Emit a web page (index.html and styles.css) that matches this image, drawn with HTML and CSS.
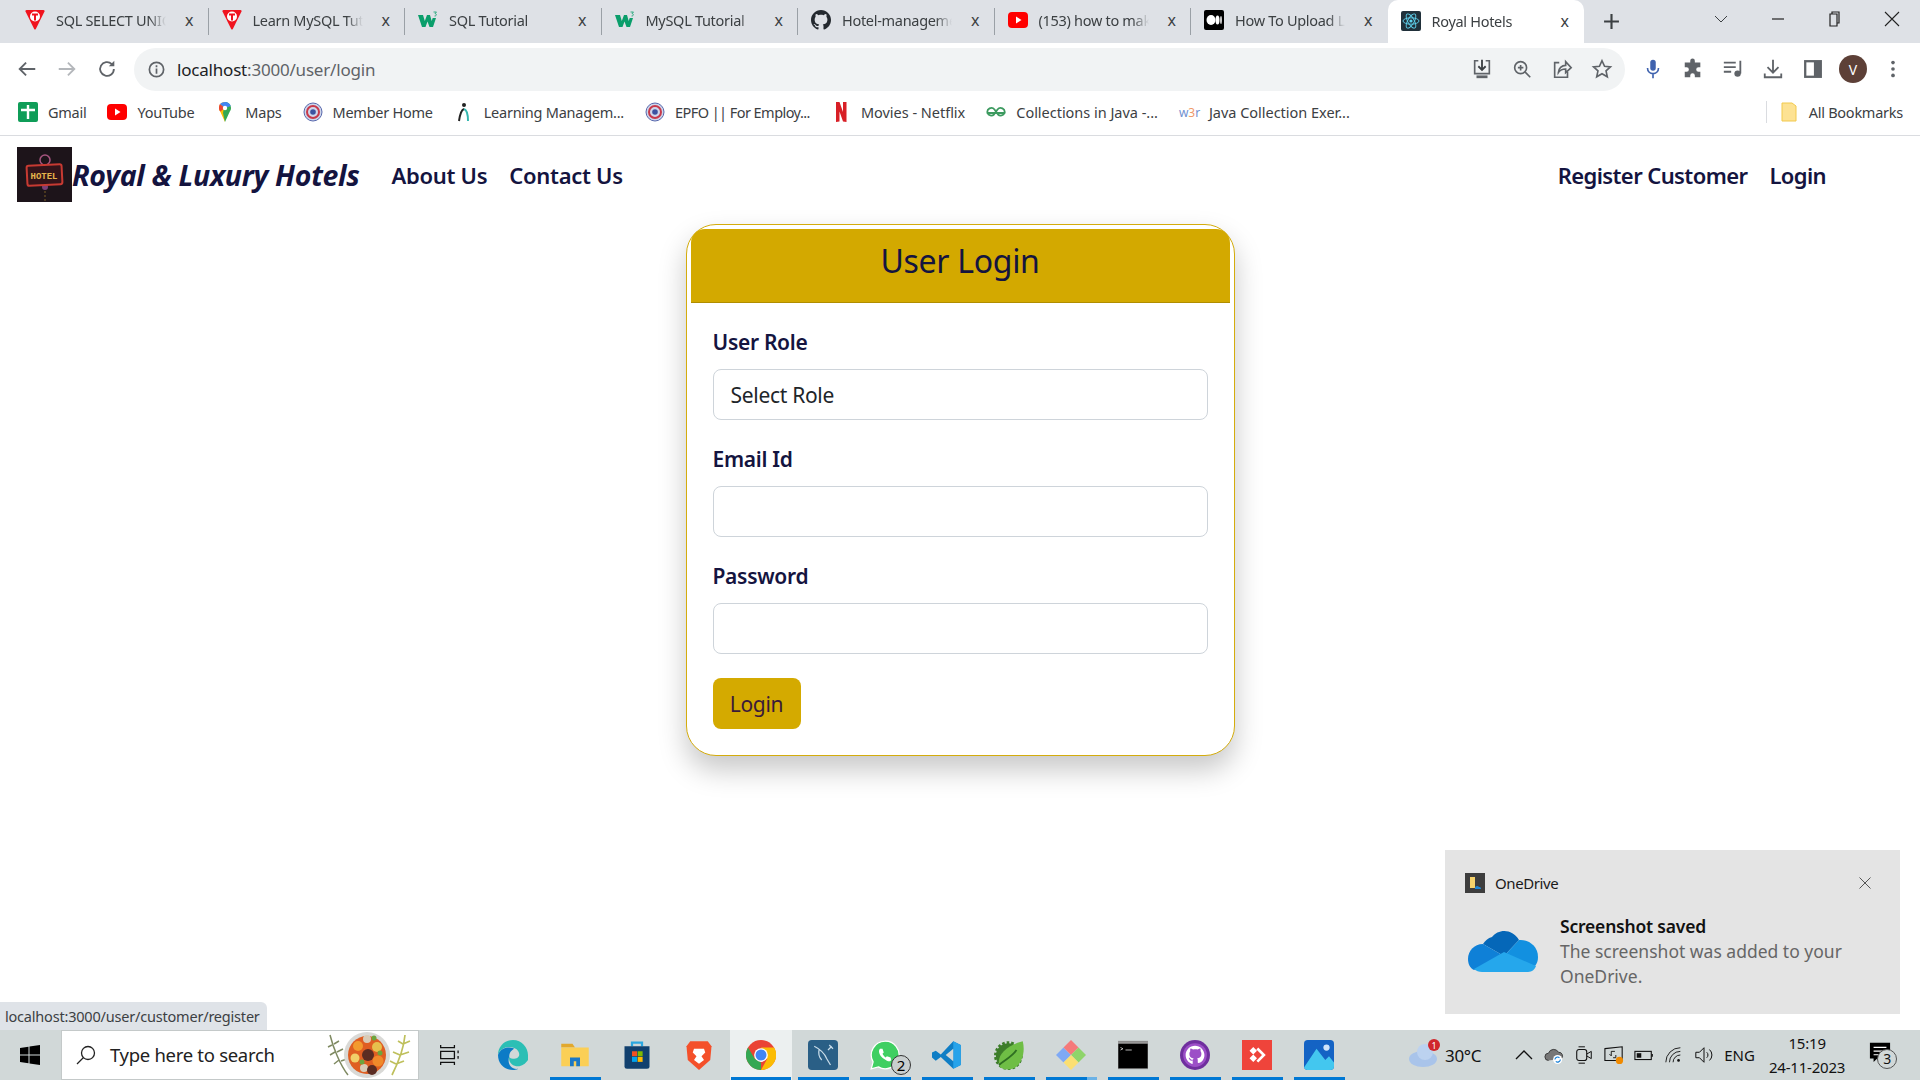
FILE: index.html
```html
<!DOCTYPE html>
<html lang="en">
<head>
  <meta charset="UTF-8">
  <title>Royal Hotels</title>
  <link rel="stylesheet" href="styles.css">
</head>
<body>
  <div class="tabstrip">
    <div class="tab">
      <svg class="tab-icon" viewBox="0 0 20 20"><path d="M1.500 0h17q1.500 0 1 1.500L10.800 19q-.8 1-1.600 0L.5 1.500q-.5-1.500 1-1.500z" fill="#f0131e"/><circle cx="10" cy="6.500" r="5" fill="#fff"/><path d="M7 3.500h6v2h-2v5H9v-5H7z" fill="#f0131e"/></svg>
      <span class="tab-title">SQL SELECT UNIQUE</span><span class="tab-close">x</span>
    </div>
    <div class="tab">
      <svg class="tab-icon" viewBox="0 0 20 20"><path d="M1.500 0h17q1.500 0 1 1.500L10.800 19q-.8 1-1.600 0L.5 1.500q-.5-1.500 1-1.500z" fill="#f0131e"/><circle cx="10" cy="6.500" r="5" fill="#fff"/><path d="M7 3.500h6v2h-2v5H9v-5H7z" fill="#f0131e"/></svg>
      <span class="tab-title">Learn MySQL Tutorial</span><span class="tab-close">x</span>
    </div>
    <div class="tab">
      <svg class="tab-icon" viewBox="0 0 20 20"><path d="M0 5h5l1.800 6L9 5h3l1.700 6 1-3h3.300l-3 9h-3.500L9.500 11.500 7.500 17H4z" fill="#0a9e6b"/><path d="M15.500 2h3l-1.500 1.500c1.800 0 1.800 2.800-.5 2.500" fill="none" stroke="#0a9e6b" stroke-width=".8"/></svg>
      <span class="tab-title">SQL Tutorial</span><span class="tab-close">x</span>
    </div>
    <div class="tab">
      <svg class="tab-icon" viewBox="0 0 20 20"><path d="M0 5h5l1.800 6L9 5h3l1.700 6 1-3h3.300l-3 9h-3.500L9.500 11.500 7.500 17H4z" fill="#0a9e6b"/><path d="M15.500 2h3l-1.500 1.500c1.800 0 1.800 2.800-.5 2.500" fill="none" stroke="#0a9e6b" stroke-width=".8"/></svg>
      <span class="tab-title">MySQL Tutorial</span><span class="tab-close">x</span>
    </div>
    <div class="tab">
      <svg class="tab-icon" viewBox="0 0 16 16"><path fill="#24292f" d="M8 0C3.580 0 0 3.580 0 8c0 3.540 2.290 6.530 5.470 7.590.4.070.55-.17.55-.38 0-.19-.01-.82-.01-1.490-2.010.37-2.530-.49-2.690-.94-.09-.23-.48-.94-.82-1.130-.28-.15-.68-.52-.01-.53.630-.01 1.080.58 1.230.82.720 1.210 1.870.87 2.330.66.070-.52.280-.87.510-1.070-1.780-.2-3.640-.89-3.640-3.950 0-.87.310-1.590.820-2.150-.08-.2-.36-1.020.08-2.120 0 0 .67-.21 2.200.820.640-.18 1.320-.27 2-.27s1.360.09 2 .27c1.530-1.040 2.200-.82 2.200-.82.440 1.100.160 1.920.080 2.120.510.560.820 1.270.820 2.150 0 3.070-1.870 3.750-3.650 3.950.290.250.540.730.540 1.480 0 1.070-.01 1.930-.01 2.200 0 .210.150.460.550.380C13.710 14.530 16 11.530 16 8c0-4.420-3.580-8-8-8z"/></svg>
      <span class="tab-title">Hotel-management</span><span class="tab-close">x</span>
    </div>
    <div class="tab">
      <svg class="tab-icon" viewBox="0 0 20 20"><rect y="2" width="20" height="16" rx="4" fill="#f00"/><path d="M8 6.500v7l5.500-3.500z" fill="#fff"/></svg>
      <span class="tab-title">(153) how to make</span><span class="tab-close">x</span>
    </div>
    <div class="tab">
      <svg class="tab-icon" viewBox="0 0 20 20"><rect width="20" height="20" rx="2" fill="#000"/><ellipse cx="7" cy="10" rx="4.500" ry="5" fill="#fff"/><ellipse cx="13.500" cy="10" rx="2" ry="4.500" fill="#fff"/><ellipse cx="17" cy="10" rx=".8" ry="4" fill="#fff"/></svg>
      <span class="tab-title">How To Upload Large</span><span class="tab-close">x</span>
    </div>
    <div class="tab active">
      <svg class="tab-icon" viewBox="0 0 20 20"><rect width="20" height="20" rx="2" fill="#20303a"/><g fill="none" stroke="#5fd3ef" stroke-width=".9"><ellipse cx="10" cy="10" rx="8" ry="3.200"/><ellipse cx="10" cy="10" rx="8" ry="3.200" transform="rotate(60 10 10)"/><ellipse cx="10" cy="10" rx="8" ry="3.200" transform="rotate(120 10 10)"/></g><circle cx="10" cy="10" r="1.600" fill="#5fd3ef"/></svg>
      <span class="tab-title">Royal Hotels</span><span class="tab-close">x</span>
    </div>
    <svg class="new-tab" viewBox="0 0 16 16"><path d="M8 1v14M1 8h14" stroke="#3c4043" stroke-width="2"/></svg>
    <div class="window-controls">
      <svg class="win-btn" viewBox="0 0 16 16"><path d="M2 5l6 6 6-6" fill="none" stroke="#3c4043"/></svg>
      <svg class="win-btn" viewBox="0 0 16 16"><path d="M2 8h12" stroke="#222" stroke-width="1.200"/></svg>
      <svg class="win-btn" viewBox="0 0 16 16"><path d="M5 3V1h7v11h-2M3 3h7v12H3z" fill="none" stroke="#222" stroke-width="1.200"/></svg>
      <svg class="win-btn" viewBox="0 0 16 16"><path d="M1 1l14 14M15 1L1 15" stroke="#222" stroke-width="1.100"/></svg>
    </div>
  </div>

  <div class="toolbar">
    <svg class="tool-icon" viewBox="0 0 24 24"><path d="M21 12H4M11 5l-7 7 7 7" fill="none" stroke="#5f6368" stroke-width="2"/></svg>
    <svg class="tool-icon" viewBox="0 0 24 24"><path d="M3 12h17M13 5l7 7-7 7" fill="none" stroke="#b4b7bb" stroke-width="2"/></svg>
    <svg class="tool-icon" viewBox="0 0 24 24"><path d="M19.500 12a7.500 7.500 0 1 1-2.300-5.400" fill="none" stroke="#5f6368" stroke-width="2"/><path d="M20 3v6h-6z" fill="#5f6368"/></svg>
    <div class="omnibox">
      <svg class="omni-info" viewBox="0 0 20 20"><circle cx="10" cy="10" r="7.500" fill="none" stroke="#5f6368" stroke-width="1.800"/><path d="M10 9v5.500M10 5.500v2" stroke="#5f6368" stroke-width="1.800"/></svg>
      <span class="url">localhost<span class="url-dim">:3000/user/login</span></span>
      <div class="omni-actions">
        <svg class="tool-icon" viewBox="0 0 24 24"><path d="M8 3H4v14h16V3h-4" fill="none" stroke="#5f6368" stroke-width="1.800"/><path d="M12 2v11M8 9l4 4 4-4" fill="none" stroke="#3c4043" stroke-width="2"/><path d="M6 19h12v3H6z" fill="#5f6368"/></svg>
        <svg class="tool-icon" viewBox="0 0 24 24"><circle cx="10.500" cy="10.500" r="6.500" fill="none" stroke="#5f6368" stroke-width="1.800"/><path d="M15.500 15.500L21 21M10.500 7.500v6M7.500 10.500h6" stroke="#5f6368" stroke-width="1.800"/></svg>
        <svg class="tool-icon" viewBox="0 0 24 24"><path d="M9 5H4v16h14v-6" fill="none" stroke="#5f6368" stroke-width="1.800"/><path d="M8 16c0-5 4-8 8-8V4l6 6.500L16 16v-4c-3 0-6 1-8 4z" fill="none" stroke="#5f6368" stroke-width="1.800"/></svg>
        <svg class="tool-icon" viewBox="0 0 24 24"><path d="M12 3l2.800 6 6.400.7-4.800 4.300 1.400 6.500L12 17.200l-5.800 3.300 1.400-6.500-4.800-4.300 6.400-.7z" fill="none" stroke="#5f6368" stroke-width="1.800"/></svg>
      </div>
    </div>
    <div class="tool-right">
      <svg class="tool-icon" viewBox="0 0 24 24"><rect x="9" y="2" width="6" height="12" rx="3" fill="#3f62ae"/><path d="M6 11c0 8 12 8 12 0M12 17v5" fill="none" stroke="#3f62ae" stroke-width="1.800"/></svg>
      <svg class="tool-icon" viewBox="0 0 24 24"><path d="M9 3a2.500 2.500 0 0 1 5 0v2h6v5h-2a2.500 2.500 0 0 0 0 5h2v6h-6v-2a2.500 2.500 0 0 0-5 0v2H3v-6h2a2.500 2.500 0 0 0 0-5H3V5h6z" fill="#5f6368"/></svg>
      <svg class="tool-icon" viewBox="0 0 24 24"><path d="M2 5h13M2 10h13M2 15h8" stroke="#5f6368" stroke-width="2"/><path d="M20 3v14" stroke="#5f6368" stroke-width="2"/><circle cx="17" cy="17" r="3.500" fill="#5f6368"/></svg>
      <svg class="tool-icon" viewBox="0 0 24 24"><path d="M12 2v13M6 10l6 6 6-6" fill="none" stroke="#5f6368" stroke-width="2"/><path d="M3 17v4h18v-4" fill="none" stroke="#5f6368" stroke-width="2"/></svg>
      <svg class="tool-icon" viewBox="0 0 24 24"><rect x="3.500" y="3.500" width="17" height="17" fill="none" stroke="#5f6368" stroke-width="2.500"/><rect x="13" y="3.500" width="7.500" height="17" fill="#5f6368"/></svg>
      <div class="avatar">V</div>
      <svg class="tool-icon" viewBox="0 0 24 24"><circle cx="12" cy="5" r="2" fill="#5f6368"/><circle cx="12" cy="12" r="2" fill="#5f6368"/><circle cx="12" cy="19" r="2" fill="#5f6368"/></svg>
    </div>
  </div>

  <div class="bookmarks">
    <div class="bookmark">
      <svg class="bm-icon" viewBox="0 0 20 20"><rect width="20" height="20" rx="2" fill="#0f9d58"/><path d="M10 3v14M3 8h14" stroke="#fff" stroke-width="2.400"/></svg>Gmail
    </div>
    <div class="bookmark">
      <svg class="bm-icon" viewBox="0 0 20 20"><rect y="2" width="20" height="16" rx="4" fill="#f00"/><path d="M8 6.500v7l5.500-3.500z" fill="#fff"/></svg>YouTube
    </div>
    <div class="bookmark">
      <svg class="bm-icon" viewBox="0 0 20 20"><path d="M10 0c-3.500 0-6 2.600-6 6 0 1.400.5 2.500 1.200 3.500L10 20z" fill="#fbbc04"/><path d="M10 0c3.500 0 6 2.600 6 6 0 1.400-.5 2.500-1.200 3.500L10 20l-2-9z" fill="#34a853"/><path d="M5 2l5 4-4.800 3.500C4.500 8.500 4 7.400 4 6c0-1.600.4-3 1-4z" fill="#ea4335"/><path d="M10 0c3 0 5 1.800 5.700 4L10 6 5 2c1.200-1.300 3-2 5-2z" fill="#4285f4"/><circle cx="10" cy="6" r="2.200" fill="#fff"/></svg>Maps
    </div>
    <div class="bookmark">
      <svg class="bm-icon" viewBox="0 0 20 20"><circle cx="10" cy="10" r="9" fill="#cfd6ea" stroke="#5768ad"/><circle cx="10" cy="10" r="6" fill="none" stroke="#c8394a" stroke-width="2"/><circle cx="10" cy="10" r="2.800" fill="#3d52a0"/></svg>Member Home
    </div>
    <div class="bookmark">
      <svg class="bm-icon" viewBox="0 0 20 20"><circle cx="10" cy="3" r="2" fill="#222"/><path d="M5 19c1-7 2-11 5-12" fill="none" stroke="#222" stroke-width="2"/><path d="M10 7c3 1 4 6 4 12" fill="none" stroke="#35b7b0" stroke-width="2"/></svg>Learning Managem...
    </div>
    <div class="bookmark bm-tight">
      <svg class="bm-icon" viewBox="0 0 20 20"><circle cx="10" cy="10" r="9" fill="#cfd6ea" stroke="#5768ad"/><circle cx="10" cy="10" r="6" fill="none" stroke="#c8394a" stroke-width="2"/><circle cx="10" cy="10" r="2.800" fill="#3d52a0"/></svg>EPFO || For Employ...
    </div>
    <div class="bookmark bm-loose">
      <svg class="bm-icon" viewBox="0 0 20 20"><path d="M5 0h3.500l3.500 10V0h3.500v20L12 19.500 8.500 9.500V19.500L5 20z" fill="#d81f26"/></svg>Movies - Netflix
    </div>
    <div class="bookmark bm-loose">
      <svg class="bm-icon" viewBox="0 0 20 20"><path d="M10 11H1.500a4 4 0 0 1 7-3.500L12 12.500a4 4 0 0 0 6.500-1.500H10M10 11h8.500a4 4 0 0 0-7-3.500L8 12.500A4 4 0 0 1 1.500 11" fill="none" stroke="#3c9a5f" stroke-width="1.800"/></svg>Collections in Java -...
    </div>
    <div class="bookmark bm-loose">
      <span class="w3r">w<span class="w3r-num">3</span>r</span>Java Collection Exer...
    </div>
    <div class="all-bookmarks">
      <svg class="bm-icon" viewBox="0 0 20 20"><path d="M3 1h10l4 3v15H3z" fill="#fde293" stroke="#f2c94c"/></svg>All Bookmarks
    </div>
  </div>

  <main class="page">
    <nav class="site-nav">
      <svg class="logo" viewBox="0 0 55 55">
        <rect width="55" height="55" fill="#1d141a"/>
        <circle cx="28" cy="13" r="5" fill="none" stroke="#a6557f" stroke-width="1.500"/>
        <circle cx="28" cy="40" r="3" fill="#7c3f78"/>
        <path d="M28 44v10" stroke="#5a4422" stroke-dasharray="2 2" stroke-width="1.500"/>
        <rect x="10" y="18" width="35" height="20" rx="2" fill="#33141a" stroke="#c73a32" stroke-width="2" transform="rotate(-3 27 28)"/>
        <text x="27" y="32" class="logo-text" text-anchor="middle">HOTEL</text>
      </svg>
      <a class="brand" href="#">Royal &amp; Luxury Hotels</a>
      <a class="nav-link nav-about" href="#">About Us</a>
      <a class="nav-link" href="#">Contact Us</a>
      <div class="nav-right">
        <a class="nav-link" href="#">Register Customer</a>
        <a class="nav-link" href="#">Login</a>
      </div>
    </nav>

    <div class="card">
      <div class="card-header">User Login</div>
      <form class="card-body">
        <label class="form-label">User Role</label>
        <div class="form-control">Select Role</div>
        <label class="form-label">Email Id</label>
        <div class="form-control"></div>
        <label class="form-label">Password</label>
        <div class="form-control"></div>
        <div class="login-btn">Login</div>
      </form>
    </div>

    <div class="status-bubble">localhost:3000/user/customer/register</div>

    <div class="toast">
      <div class="toast-head">
        <svg class="toast-app" viewBox="0 0 20 20"><rect width="20" height="20" fill="#3d3d3d"/><path d="M5 4h5v11H5z" fill="#f6d26b"/><path d="M10 16c-1-3 3-4 4-2 2 0 3 2 1 2z" fill="#1f86d6"/></svg>
        <span class="toast-app-name">OneDrive</span>
        <svg class="toast-close" viewBox="0 0 12 12"><path d="M.5.5l11 11M11.500.5l-11 11" stroke="#555"/></svg>
      </div>
      <div class="toast-body">
        <svg class="cloud" viewBox="0 0 70 48">
          <path d="M24 11c6-8 20-9 27 3L36 30 15 18c2-3 5-6 9-7z" fill="#0567b8"/>
          <path d="M15 18c-9 0-15 7-15 15 0 5 2 9 6 11l30-14z" fill="#0f80d7"/>
          <path d="M51 14c8-1 19 5 19 17 0 4-1 6-3 9L36 30z" fill="#1290e0"/>
          <path d="M6 43c2 2 5 3 8 3h46c4 0 7-3 8-6L36 26z" fill="#25a7ec"/>
        </svg>
        <div class="toast-text">
          <div class="toast-title">Screenshot saved</div>
          <div class="toast-msg">The screenshot was added to your OneDrive.</div>
        </div>
      </div>
    </div>
  </main>

  <footer class="taskbar">
    <svg class="start" viewBox="0 0 20 20"><path d="M0 3l8.500-1.300V9.500H0zM9.500 1.500L20 0v9.500H9.500zM0 10.500h8.500v7.800L0 17zM9.500 10.500H20V20L9.500 18.500z" fill="#000"/></svg>
    <div class="search-box">
      <svg class="search-glass" viewBox="0 0 20 20"><circle cx="12" cy="8" r="6.500" fill="none" stroke="#222" stroke-width="1.300"/><path d="M7.500 12.500L1 19" stroke="#222" stroke-width="1.300"/></svg>
      <span class="search-text">Type here to search</span>
      <svg class="search-art" viewBox="0 0 90 48">
        <path d="M5 4c3 12 10 30 18 40M7 14l-4 2M10 21l-5 3M14 29l-5 4M9 13l5-3M12 21l6-3M16 30l6-2" stroke="#7f8a62" stroke-width="1.500" fill="none"/>
        <circle cx="42" cy="24" r="23" fill="#d9d9d6"/>
        <circle cx="42" cy="24" r="19" fill="#df5e22"/>
        <circle cx="33" cy="15" r="5" fill="#f39a2e"/>
        <circle cx="42" cy="8" r="4" fill="#d9cbb6"/>
        <circle cx="52" cy="16" r="5" fill="#e7c04c"/>
        <circle cx="43" cy="24" r="6" fill="#5a2c22"/>
        <circle cx="30" cy="27" r="4.500" fill="#f2cf69"/>
        <circle cx="53" cy="30" r="5.500" fill="#f08a2a"/>
        <circle cx="39" cy="37" r="4" fill="#d9cbb6"/>
        <circle cx="47" cy="39" r="5" fill="#5a2c22"/>
        <circle cx="49" cy="7" r="2.500" fill="#6da53d"/>
        <circle cx="55" cy="22" r="2.500" fill="#6da53d"/>
        <circle cx="37" cy="31" r="2.500" fill="#6da53d"/>
        <path d="M80 4c-1 12-7 28-13 40M78 13l-5-3M78 13l7-3M75 24l-7-3M75 24l9-3M71 33l-6-3M71 33l8-3" stroke="#bfc05c" stroke-width="1.700" fill="none"/>
      </svg>
    </div>
    <div class="task-items">
      <div class="task-item">
        <svg class="task-icon small" viewBox="0 0 24 24"><path d="M4 1v3h15V1M4 23v-3h15v3M4 8h15v8H4zM23 7v3M23 13v3" fill="none" stroke="#111" stroke-width="1.400"/></svg>
      </div>
      <div class="task-item">
        <svg class="task-icon edge" viewBox="0 0 24 24"><path d="M12 0C5 0 0 5.500 0 12c1-4 5-6.500 9-6.500 5 0 8 3 8 6 0 2-2 3.500-5 3.500-2 0-3-1-3-2-1 5 3 8 7 8 3 0 6-2 8-5 1-2 0-3 0-4 0-6-5-12-12-12z" fill="#2bbfb5"/><path d="M0 12c0 7 5 12 12 12 3 0 4-1 4-1-5 1-9-4-7-10 0-3 2-5 4-6-2-1-3-1-5-1C4 6 1 9 0 12z" fill="#0c7bc6"/></svg>
      </div>
      <div class="task-item open">
        <svg class="task-icon" viewBox="0 0 24 24"><path d="M1 3h9l2 3H1z" fill="#e2a82d"/><path d="M1 6h22v15H1z" fill="#fbcf56"/><path d="M8 14h8v7h-3v-4h-2v4H8z" fill="#1b78c6"/></svg>
      </div>
      <div class="task-item">
        <svg class="task-icon" viewBox="0 0 24 24"><path d="M8 5V2h8v3" fill="none" stroke="#2ba7e0" stroke-width="1.800"/><path d="M2 5h20v16a2 2 0 0 1-2 2H4a2 2 0 0 1-2-2z" fill="#11406e"/><path d="M8 9h4v4H8z" fill="#f25022"/><path d="M12.500 9h4v4h-4z" fill="#7fba00"/><path d="M8 13.500h4v4H8z" fill="#00a4ef"/><path d="M12.500 13.500h4v4h-4z" fill="#ffb900"/></svg>
      </div>
      <div class="task-item">
        <svg class="task-icon" viewBox="0 0 24 24"><path d="M5 1h14l3 4-1 11-9 8-9-8L2 5z" fill="#f4502a"/><path d="M8 7h8l1 3-3 3 2 3-4 3-4-3 2-3-3-3z" fill="#fff"/></svg>
      </div>
      <div class="task-item active">
        <svg class="task-icon" viewBox="0 0 24 24"><circle cx="12" cy="12" r="12" fill="#ea4335"/><path d="M12 24a12 12 0 0 1-10.400-18L7 15l5 3z" fill="#34a853"/><path d="M12 6h10.500A12 12 0 0 1 12 24l5-9z" fill="#fbbc04"/><circle cx="12" cy="12" r="5.500" fill="#fff"/><circle cx="12" cy="12" r="4.400" fill="#4285f4"/></svg>
      </div>
      <div class="task-item open">
        <svg class="task-icon" viewBox="0 0 24 24"><rect width="24" height="24" rx="3" fill="#2a5f86"/><path d="M5 5c4 2 8 5 10 10l3 5M9 7c-1 4 0 7 2 9M17 4l3 3M19 5l-3 3" fill="none" stroke="#c7dbe8" stroke-width="1"/></svg>
      </div>
      <div class="task-item open">
        <svg class="task-icon" viewBox="0 0 24 24"><path d="M12 1a11 11 0 0 0-9.500 16.500L1 23l5.700-1.500A11 11 0 1 0 12 1z" fill="#3fcf62" stroke="#fff"/><path d="M8 7c-2 2 0 6 3 8s5 3 6 1l-.5-2-3-1-1 1c-1-.5-2-2-2.500-3l1-1-1-3z" fill="#fff"/></svg>
        <span class="task-badge">2</span>
      </div>
      <div class="task-item open">
        <svg class="task-icon" viewBox="0 0 24 24"><path d="M17 1l6 3v16l-6 3-10-9.500-4 3L0 14V10l3-1.500 4 3z" fill="#0f7ec5"/><path d="M17 1l6 3v16l-6 3z" fill="#27a3ea"/><path d="M17 7l-6 5 6 5z" fill="#d1d8d8"/></svg>
      </div>
      <div class="task-item open">
        <svg class="task-icon" viewBox="0 0 24 24"><circle cx="11.500" cy="12.500" r="10" fill="#3d7d2a" stroke="#3d7d2a" stroke-width="3" stroke-dasharray="2 1.500"/><path d="M23 1c2 8 0 17-6 21-4 2-9 2-12 0C1 14 8 5 23 1z" fill="#6fbe45"/><path d="M4 20C8 16 14 14 18 8" fill="none" stroke="#2f6f22" stroke-width="1.500"/></svg>
      </div>
      <div class="task-item open split">
        <svg class="task-icon" viewBox="0 0 24 24"><path d="M6 6l6 6-6 6-6-6z" fill="#7fa9f5"/><path d="M12 0l6 6-6 6-6-6z" fill="#f57a7a"/><path d="M18 6l6 6-6 6-6-6z" fill="#8fd46a"/><path d="M12 12l6 6-6 6-6-6z" fill="#fbdf73"/></svg>
      </div>
      <div class="task-item open">
        <svg class="task-icon" viewBox="0 0 24 24"><rect y="1" width="24" height="22" fill="#000" stroke="#888" stroke-width=".6"/><rect y="1" width="24" height="2" fill="#999"/><path d="M2 6l2 1-2 1M6 8h5" stroke="#ccc" stroke-width=".7" fill="none"/></svg>
      </div>
      <div class="task-item open">
        <svg class="task-icon" viewBox="0 0 24 24"><circle cx="12" cy="12" r="12" fill="#6f2f9e"/><circle cx="12" cy="12" r="9.500" fill="#9c4fc7"/><path fill="#fff" transform="translate(4.500 4.500) scale(.94)" d="M8 0C3.580 0 0 3.580 0 8c0 3.540 2.290 6.530 5.470 7.590.4.070.55-.17.55-.38l0-2.500c-2 .4-2.500-.5-2.700-.9-.5-1-1-1.500-.5-1.500.6 0 1 .6 1.200.8.700 1.200 1.900.9 2.300.7.100-.5.300-.9.500-1.100-1.800-.2-3.600-.9-3.600-3.900 0-.9.300-1.600.8-2.200-.1-.2-.4-1 .1-2.100 0 0 .7-.2 2.200.8.600-.2 1.300-.3 2-.3s1.400.1 2 .3c1.500-1 2.200-.8 2.200-.8.400 1.100.2 1.900.1 2.100.5.600.8 1.300.8 2.200 0 3-1.900 3.700-3.700 3.900.3.300.6.700.6 1.500v2.200c0 .2.200.5.600.4C13.700 14.500 16 11.500 16 8c0-4.400-3.600-8-8-8z"/></svg>
      </div>
      <div class="task-item open">
        <svg class="task-icon" viewBox="0 0 24 24"><rect width="24" height="24" fill="#ef443b"/><path d="M10 12l-3-3 3-3 3 3zM10 18l-3-3 3-3 3 3z" fill="#fff" transform="translate(-1 -.5)"/><path d="M13 6l6 6-6 6-1.500-1.500L16 12l-4.500-4.500z" fill="#fff"/></svg>
      </div>
      <div class="task-item open">
        <svg class="task-icon" viewBox="0 0 24 24"><rect width="24" height="24" rx="3" fill="#1463c4"/><circle cx="18" cy="6" r="2.500" fill="#cfe4fa"/><path d="M0 22L10 7l7 9 3-3 4 5v3a3 3 0 0 1-3 3H3a3 3 0 0 1-3-2z" fill="#43c7ef"/></svg>
      </div>
    </div>
    <div class="tray">
      <div class="weather">
        <svg class="weather-icon" viewBox="0 0 34 30"><ellipse cx="14" cy="21" rx="14" ry="8" fill="#a9c4ea"/><circle cx="16" cy="14" r="8" fill="#bcd2f0"/><circle cx="25" cy="7" r="6" fill="#d0262b"/><text x="25" y="10.500" class="weather-num" text-anchor="middle">1</text></svg>
        <span>30°C</span>
      </div>
      <svg class="tray-icon chevron" viewBox="0 0 20 20"><path d="M2 14l8-8 8 8" fill="none" stroke="#111" stroke-width="1.300"/></svg>
      <svg class="tray-icon" viewBox="0 0 22 22"><path d="M5 17a4 4 0 0 1 0-8 6 6 0 0 1 11-1 4 4 0 0 1 3 7" fill="#777" stroke="#333"/><circle cx="15" cy="16" r="5" fill="#fff"/><path d="M12 16a3 3 0 0 1 5-2M18 16a3 3 0 0 1-5 2" fill="none" stroke="#0a78d4" stroke-width="1.200"/></svg>
      <svg class="tray-icon" viewBox="0 0 22 22"><rect x="3" y="5" width="11" height="12" rx="2.500" fill="none" stroke="#111" stroke-width="1.200"/><path d="M14 10l5-3v8l-5-3M5 2h7M5 20h7" fill="none" stroke="#111" stroke-width="1.100"/></svg>
      <svg class="tray-icon" viewBox="0 0 22 22"><path d="M1 4l19-2v15H1z" fill="none" stroke="#111" stroke-width="1.200"/><path d="M12 7H8v5M8 12l-2-2M10 14h3v-3" fill="none" stroke="#111"/><circle cx="17" cy="17" r="4" fill="#f08a00"/></svg>
      <svg class="tray-icon" viewBox="0 0 22 22"><rect x="1" y="7" width="18" height="9" fill="none" stroke="#111" stroke-width="1.200"/><rect x="3" y="9" width="5" height="5" fill="#111"/><path d="M20 10v3" stroke="#111" stroke-width="1.500"/></svg>
      <svg class="tray-icon" viewBox="0 0 22 22"><path d="M2 19A16 16 0 0 1 18 3M6 19A12 12 0 0 1 18 7M10 19a8 8 0 0 1 8-8" fill="none" stroke="#111"/><circle cx="16" cy="17" r="1.500" fill="#111"/></svg>
      <svg class="tray-icon" viewBox="0 0 22 22"><path d="M2 8h4l5-5v16l-5-5H2zM14 8a4 4 0 0 1 0 6M17 5a8 8 0 0 1 0 12" fill="none" stroke="#111" stroke-width="1.100"/></svg>
      <span class="lang">ENG</span>
      <div class="clock"><div>15:19</div><div>24-11-2023</div></div>
      <div class="notify">
        <svg class="notify-icon" viewBox="0 0 24 24"><path d="M1 2h22v17H9l-4 4v-4H1z" fill="#000"/><path d="M5 7h14M5 11h14M5 15h9" stroke="#fff" stroke-width="1.300"/></svg>
        <span class="notify-count">3</span>
      </div>
    </div>
  </footer>
</body>
</html>
```

FILE: styles.css
```css
* {
  box-sizing: border-box;
}
html, body {
  height: 100%;
}
body {
  margin: 0;
  display: flex;
  flex-direction: column;
  height: 1080px;
  overflow: hidden;
  background-color: #fff;
  font-family: "Noto Sans", "Open Sans", sans-serif;
  color: #3c4043;
}

/* browser chrome */
.tabstrip {
  height: 43px;
  flex-shrink: 0;
  display: flex;
  align-items: stretch;
  padding-left: 12px;
  background-color: #dee1e6;
}
.tab {
  width: 196.5px;
  display: flex;
  align-items: center;
  padding: 0 0 4px 13px;
  border-right: 1px solid #9aa0a6;
  margin: 8px 0 8px;
  font-size: 14.5px;
  letter-spacing: -0.3px;
}
.tab:nth-child(7) {
  border-right: none;
}
.tab.active {
  margin: 0;
  padding: 0 0 2px 13px;
  border-right: none;
  background-color: #fff;
  border-radius: 10px 10px 0 0;
}
.tab-icon {
  width: 20px;
  height: 20px;
  flex-shrink: 0;
  margin-right: 11px;
}
.tab-title {
  width: 110px;
  overflow: hidden;
  white-space: nowrap;
  -webkit-mask-image: linear-gradient(to right, #000 85%, transparent);
  mask-image: linear-gradient(to right, #000 85%, transparent);
}
.tab-close {
  margin-left: 19px;
  font-size: 16px;
  line-height: 20px;
  color: #3c4043;
}
.new-tab {
  width: 17px;
  height: 17px;
  margin: 13px 0 0 19px;
}
.window-controls {
  margin-left: auto;
  display: flex;
  align-items: flex-start;
  gap: 41px;
  padding: 11px 20px 0 0;
}
.win-btn {
  width: 16px;
  height: 16px;
}
.toolbar {
  height: 52px;
  flex-shrink: 0;
  display: flex;
  align-items: center;
  gap: 18px;
  padding-left: 16px;
  background-color: #fff;
}
.tool-icon {
  width: 22px;
  height: 22px;
  flex-shrink: 0;
}
.omnibox {
  width: 1491px;
  height: 43px;
  margin-left: -2px;
  display: flex;
  align-items: center;
  padding: 0 12px 0 13px;
  border-radius: 22px;
  background-color: #f1f3f4;
}
.omni-info {
  width: 19px;
  height: 19px;
  margin-right: 11px;
}
.url {
  font-size: 17px;
  letter-spacing: -0.2px;
  color: #202124;
}
.url-dim {
  color: #5f6368;
}
.omni-actions {
  margin-left: auto;
  display: flex;
  gap: 18px;
}
.tool-right {
  display: flex;
  align-items: center;
  gap: 18px;
  margin-left: -1px;
}
.avatar {
  width: 28px;
  height: 28px;
  margin: 0 -3px;
  border-radius: 50%;
  background-color: #5d4037;
  color: #fff;
  font-size: 14px;
  display: flex;
  align-items: center;
  justify-content: center;
}
.bookmarks {
  height: 41px;
  flex-shrink: 0;
  display: flex;
  align-items: center;
  gap: 21px;
  padding: 0 17px 6px 18px;
  border-bottom: 1px solid #dadce0;
  font-size: 14.5px;
  letter-spacing: -0.25px;
}
.bookmark {
  display: flex;
  align-items: center;
  gap: 10px;
  white-space: nowrap;
}
.bm-tight {
  letter-spacing: -0.55px;
}
.bm-loose {
  letter-spacing: -0.02px;
}
.bm-icon {
  width: 20px;
  height: 20px;
}
.w3r {
  width: 20px;
  font-size: 12px;
  color: #6f8fd0;
}
.w3r-num {
  color: #ef9a6a;
}
.all-bookmarks {
  margin-left: auto;
  display: flex;
  align-items: center;
  gap: 10px;
  padding-left: 12px;
  height: 22px;
  border-left: 1px solid #dadce0;
}

/* site page */
.page {
  flex: 1;
  position: relative;
  color: #14143f;
}
.site-nav {
  display: flex;
  align-items: center;
  height: 55px;
  margin-top: 11px;
  padding: 0 94px 0 17px;
}
.logo {
  width: 55px;
  height: 55px;
}
.logo-text {
  font-family: "Liberation Mono", monospace;
  font-size: 9px;
  font-weight: 700;
  fill: #e6b44c;
}
.brand {
  font-size: 28.5px;
  font-weight: 700;
  font-style: italic;
  color: #14143f;
  text-decoration: none;
  letter-spacing: -0.3px;
}
.nav-link {
  font-size: 22px;
  font-weight: 600;
  color: #14143f;
  text-decoration: none;
  letter-spacing: -0.3px;
  white-space: nowrap;
}
.nav-about {
  margin: 0 22px 0 32px;
}
.nav-right {
  margin-left: auto;
  display: flex;
  gap: 22px;
}
.nav-right .nav-link {
  letter-spacing: -0.6px;
}
.card {
  width: 549px;
  height: 532px;
  margin: 22px auto 0;
  padding: 4px 4px 0;
  background-color: #fff;
  border: 1px solid #d4ac0d;
  border-radius: 30px;
  box-shadow: 0 14px 28px rgba(0, 0, 0, 0.22);
}
.card-header {
  height: 74px;
  padding-top: 10px;
  text-align: center;
  background-color: #d3a900;
  border-bottom: 1px solid #b08d00;
  border-radius: 14px 14px 0 0;
  font-size: 32px;
  letter-spacing: -0.3px;
}
.card-body {
  padding: 24px 22px 20px;
}
.form-label {
  display: block;
  font-size: 21px;
  font-weight: 600;
  letter-spacing: -0.3px;
  line-height: 30px;
  margin-bottom: 12px;
}
.form-control {
  height: 51px;
  margin-bottom: 24px;
  padding: 0 17px;
  display: flex;
  align-items: center;
  border: 1px solid #ced4da;
  border-radius: 8px;
  font-size: 21px;
  letter-spacing: -0.3px;
  color: #212529;
}
.login-btn {
  width: 88px;
  height: 51px;
  margin-top: 19px;
  display: flex;
  align-items: center;
  justify-content: center;
  background-color: #d4aa00;
  border-radius: 8px;
  font-size: 21px;
  letter-spacing: -0.3px;
  color: #3a1a3a;
}
.status-bubble {
  position: absolute;
  left: 0;
  bottom: 0;
  width: 267px;
  height: 28px;
  padding: 4px 0 0 5px;
  background-color: #dfe3e8;
  border-top-right-radius: 6px;
  font-size: 14.5px;
  letter-spacing: -0.2px;
  color: #3c4043;
}

/* notification */
.toast {
  position: absolute;
  right: 20px;
  bottom: 16px;
  width: 455px;
  height: 164px;
  padding: 23px 20px 0 20px;
  background-color: #e4e4e4;
  color: #1a1a1a;
}
.toast-head {
  display: flex;
  align-items: center;
  gap: 10px;
  font-size: 15px;
}
.toast-app {
  width: 20px;
  height: 20px;
}
.toast-app-name {
  letter-spacing: -0.4px;
}
.toast-close {
  width: 12px;
  height: 12px;
  margin-left: auto;
  margin-right: 9px;
}
.toast-body {
  display: flex;
  gap: 22px;
  margin-top: 21px;
}
.cloud {
  width: 70px;
  height: 48px;
  margin: 12px 0 0 3px;
}
.toast-title {
  font-size: 17.5px;
  font-weight: 600;
  line-height: 25px;
  letter-spacing: -0.2px;
  color: #111;
}
.toast-msg {
  width: 300px;
  font-size: 17.5px;
  line-height: 25px;
  letter-spacing: 0;
  color: #666;
}

/* windows taskbar */
.taskbar {
  height: 50px;
  flex-shrink: 0;
  display: flex;
  align-items: stretch;
  background-color: #d1d8d8;
}
.start {
  width: 20px;
  height: 20px;
  margin: 15px 21px 0 20px;
}
.search-box {
  width: 358px;
  display: flex;
  align-items: center;
  background-color: #fff;
  border: 1px solid #c4c9c9;
  padding-left: 14px;
}
.search-glass {
  width: 20px;
  height: 20px;
}
.search-text {
  margin: 0 0 2px 14px;
  font-size: 18.500px;
  letter-spacing: -0.3px;
  color: #222;
}
.search-art {
  width: 90px;
  height: 48px;
  margin-left: auto;
  margin-right: 3px;
}
.task-items {
  display: flex;
  margin-left: 1px;
}
.task-item {
  width: 62px;
  position: relative;
  display: flex;
  align-items: center;
  justify-content: center;
}
.task-icon {
  width: 30px;
  height: 30px;
}
.task-icon.small {
  width: 22px;
  height: 22px;
  margin-right: 6px;
}
.task-item.open::after {
  content: "";
  position: absolute;
  left: 5.500px;
  right: 5.500px;
  bottom: 0;
  height: 3px;
  background-color: #0078d4;
}
.task-item.active {
  background-color: #ecf0f0;
}
.task-item.active::after {
  content: "";
  position: absolute;
  left: 1px;
  right: 1px;
  bottom: 0;
  height: 3px;
  background-color: #0078d4;
}
.task-item.split::after {
  background: linear-gradient(to right, #0078d4 80%, #6cb2e6 80%);
}
.task-badge {
  position: absolute;
  right: 5px;
  bottom: 5px;
  width: 20px;
  height: 20px;
  border: 1px solid #333;
  border-radius: 50%;
  background-color: #c9cfcf;
  color: #000;
  font-size: 15px;
  line-height: 18px;
  text-align: center;
}
.tray {
  flex: 1;
  display: flex;
  align-items: center;
  color: #111;
  font-size: 17px;
  padding-left: 59px;
}
.weather {
  display: flex;
  align-items: center;
  gap: 2px;
  letter-spacing: -0.3px;
}
.weather-icon {
  width: 34px;
  height: 30px;
  margin-bottom: 4px;
}
.weather-num {
  font-size: 9px;
  fill: #fff;
}
.tray-icon {
  width: 20px;
  height: 20px;
  margin-right: 10px;
}
.chevron {
  margin-left: 33px;
}
.lang {
  margin-left: 0;
  font-size: 15px;
}
.clock {
  margin-left: 14px;
  text-align: center;
  font-size: 15px;
  line-height: 24px;
  letter-spacing: -0.2px;
}
.notify {
  position: relative;
  margin-left: 24px;
  width: 28px;
  height: 28px;
}
.notify-icon {
  width: 22px;
  height: 22px;
}
.notify-count {
  position: absolute;
  right: 0;
  bottom: 0;
  width: 20px;
  height: 20px;
  border: 1px solid #555;
  border-radius: 50%;
  background-color: #d1d8d8;
  font-size: 14px;
  line-height: 18px;
  text-align: center;
}
```
